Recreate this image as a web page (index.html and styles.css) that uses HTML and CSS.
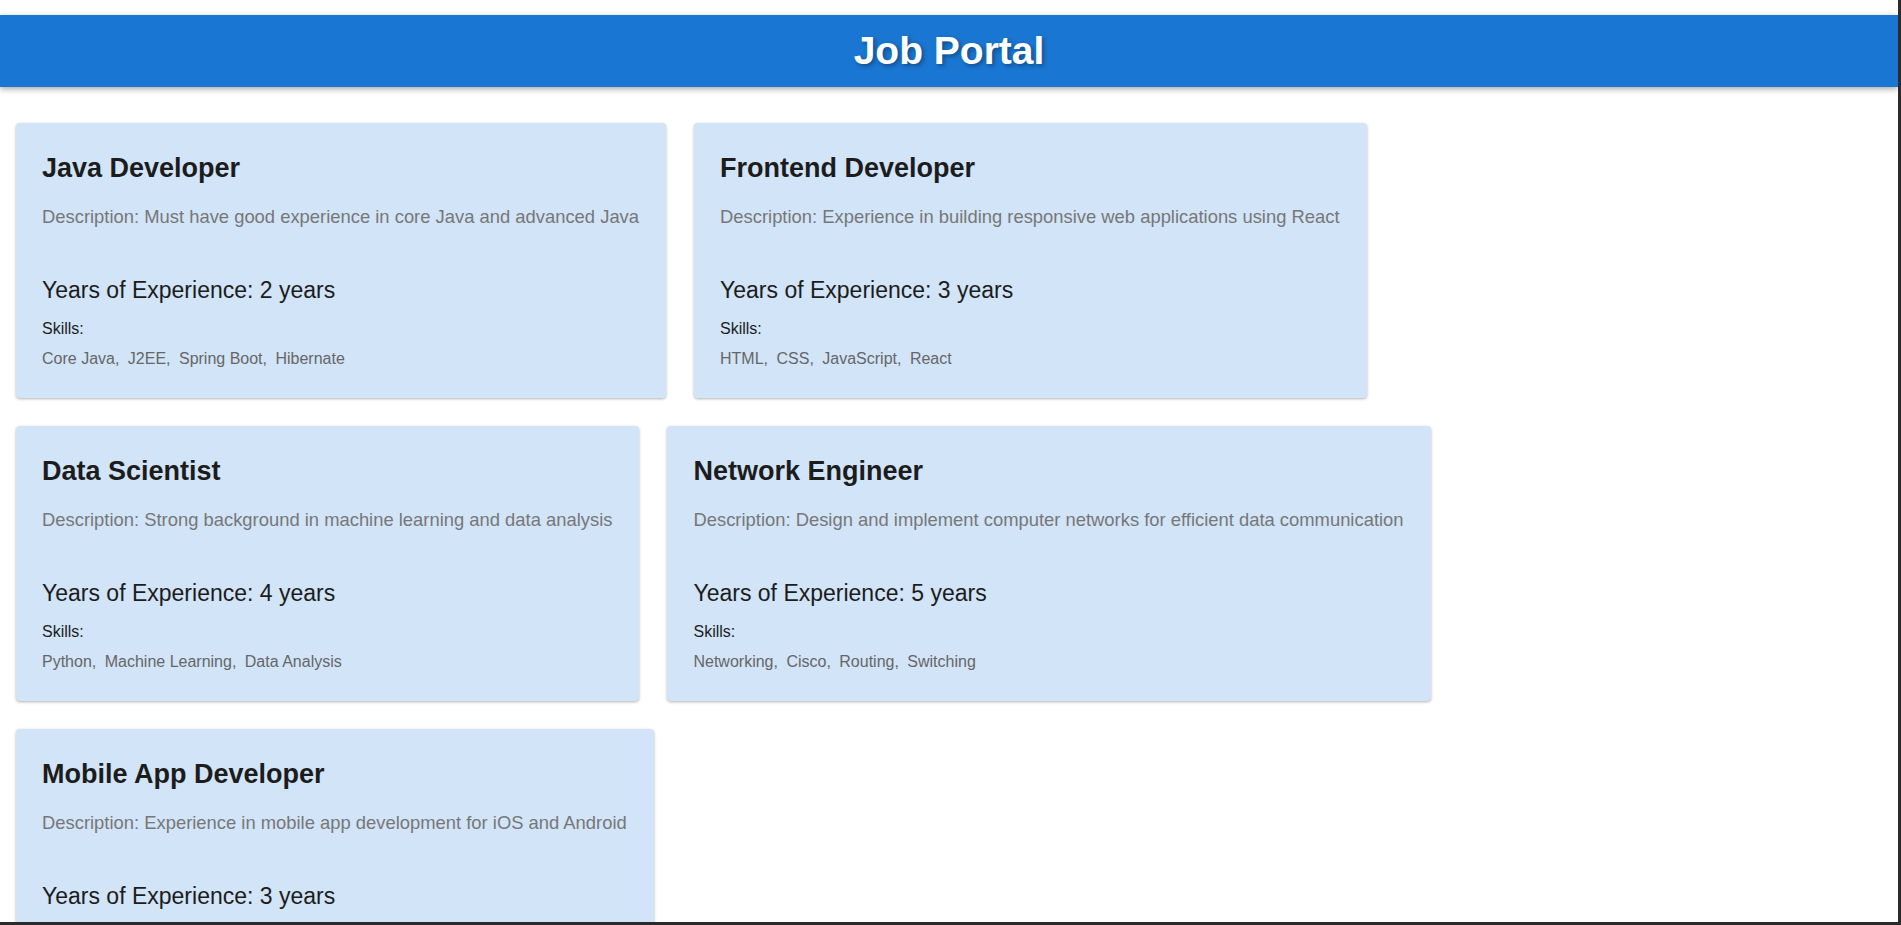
FILE: index.html
```html
<!DOCTYPE html>
<html lang="en">
<head>
<meta charset="utf-8">
<title>Job Portal</title>
<link rel="stylesheet" href="styles.css">
</head>
<body>
<div class="frame">
  <header class="app-bar">
    <h1 class="app-title">Job Portal</h1>
  </header>
  <main class="job-list">
    <article class="job-card">
      <h2 class="job-title">Java Developer</h2>
      <p class="job-desc">Description: Must have good experience in core Java and advanced Java</p>
      <p class="job-exp">Years of Experience: 2 years</p>
      <p class="skills-label">Skills:</p>
      <p class="skills-list"><span class="skill">Core Java, </span><span class="skill">J2EE, </span><span class="skill">Spring Boot, </span><span class="skill">Hibernate</span></p>
    </article>
    <article class="job-card">
      <h2 class="job-title">Frontend Developer</h2>
      <p class="job-desc">Description: Experience in building responsive web applications using React</p>
      <p class="job-exp">Years of Experience: 3 years</p>
      <p class="skills-label">Skills:</p>
      <p class="skills-list"><span class="skill">HTML, </span><span class="skill">CSS, </span><span class="skill">JavaScript, </span><span class="skill">React</span></p>
    </article>
    <article class="job-card">
      <h2 class="job-title">Data Scientist</h2>
      <p class="job-desc">Description: Strong background in machine learning and data analysis</p>
      <p class="job-exp">Years of Experience: 4 years</p>
      <p class="skills-label">Skills:</p>
      <p class="skills-list"><span class="skill">Python, </span><span class="skill">Machine Learning, </span><span class="skill">Data Analysis</span></p>
    </article>
    <article class="job-card">
      <h2 class="job-title">Network Engineer</h2>
      <p class="job-desc">Description: Design and implement computer networks for efficient data communication</p>
      <p class="job-exp">Years of Experience: 5 years</p>
      <p class="skills-label">Skills:</p>
      <p class="skills-list"><span class="skill">Networking, </span><span class="skill">Cisco, </span><span class="skill">Routing, </span><span class="skill">Switching</span></p>
    </article>
    <article class="job-card">
      <h2 class="job-title">Mobile App Developer</h2>
      <p class="job-desc">Description: Experience in mobile app development for iOS and Android</p>
      <p class="job-exp">Years of Experience: 3 years</p>
      <p class="skills-label">Skills:</p>
      <p class="skills-list"><span class="skill">Swift, </span><span class="skill">Kotlin, </span><span class="skill">React Native, </span><span class="skill">Flutter</span></p>
    </article>
  </main>
</div>
</body>
</html>
```

FILE: styles.css
```css
html, body {
  margin: 0;
  padding: 0;
  background: #ffffff;
}

body {
  font-family: "Liberation Sans", Arial, sans-serif;
}

.frame {
  height: 100vh;
  box-sizing: border-box;
  border-right: 3px solid #2b2b2b;
  border-bottom: 3px solid #2b2b2b;
  overflow: hidden;
  padding-top: 15px;
}

.app-bar {
  background: #1976d2;
  height: 72px;
  box-shadow: 0 2px 6px rgba(0, 0, 0, 0.35);
  display: flex;
  align-items: center;
  justify-content: center;
}

.app-title {
  margin: 0;
  color: #ffffff;
  font-size: 39px;
  font-weight: 700;
  line-height: 72px;
  text-shadow: 2px 2px 4px rgba(0, 0, 0, 0.35);
}

.job-list {
  display: flex;
  flex-wrap: wrap;
  align-items: flex-start;
  gap: 28px;
  padding: 36px 16px;
}

.job-card {
  background: #d2e4f8;
  border-radius: 4px;
  box-shadow: 0 1px 3px rgba(0, 0, 0, 0.3);
  padding: 29px 27px 29px 26px;
  white-space: nowrap;
}

.job-title {
  margin: 0;
  font-size: 27px;
  line-height: 32px;
  font-weight: 700;
  color: #1c1c1c;
}

.job-desc {
  margin: 21px 0 0;
  font-size: 18.4px;
  line-height: 24px;
  color: #777777;
}

.job-exp {
  margin: 47px 0 0;
  font-size: 23px;
  line-height: 28px;
  color: #1c1c1c;
}

.skills-label {
  margin: 15px 0 0;
  font-size: 16px;
  line-height: 20px;
  color: #1c1c1c;
}

.skills-list {
  margin: 10px 0 0;
  font-size: 16px;
  line-height: 20px;
  color: #666666;
}

.skill {
  margin-right: 4px;
}

.skill:last-child {
  margin-right: 0;
}
```
